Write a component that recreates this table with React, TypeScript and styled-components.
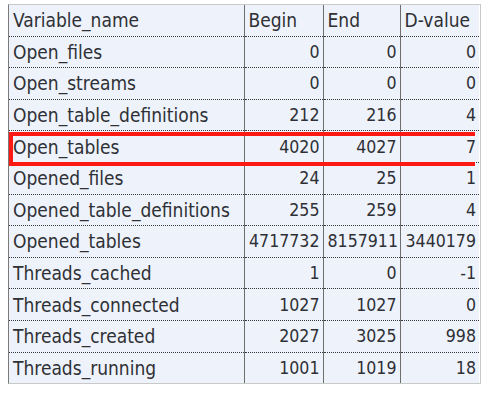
import React from "react";
import styled, { createGlobalStyle } from "styled-components";

const Global = createGlobalStyle`
  html, body { margin: 0; padding: 0; background: #ffffff; }
  body { font-family: "DejaVu Sans", Verdana, sans-serif; }
`;

const Page = styled.div`
  padding: 4px 0 0 8px;
`;

const Frame = styled.div`
  position: relative;
  width: 471px;
  border: 1px solid #c9c9c9;
  border-left-color: #7a7a7a;
`;

const Table = styled.table`
  border-collapse: collapse;
  table-layout: fixed;
  width: 470px;
  background: #eef3fb;
  color: #2f3036;
  font-size: 19px;
  font-family: "DejaVu Sans Condensed", "DejaVu Sans", sans-serif;
  font-stretch: condensed;
`;

const Cell = styled.td<{ $num?: boolean }>`
  height: 30.6px;
  padding: 0 3px 0 4px;
  text-align: ${(p) => (p.$num ? "right" : "left")};
  font-size: ${(p) => (p.$num ? "17.6px" : "19px")};
  white-space: nowrap;
  overflow: hidden;
  border-left: 1px solid #6e6e6e;
  border-bottom: 1px dotted #3a3a3a;
  &:first-child { border-left: none; }
`;

const Head = styled(Cell).attrs({ as: "th" })`
  font-weight: normal;
  text-align: left;
  font-size: 19px;
`;

const Row = styled.tr<{ $last?: boolean }>`
  ${(p) => (p.$last ? "td { border-bottom: none; }" : "")}
`;

const Highlight = styled.div`
  position: absolute;
  left: 0;
  top: 127px;
  width: 462px;
  height: 26px;
  border: 4px solid #fe1a14;
  border-right: none;
  pointer-events: none;
`;

const rows: [string, string, string, string][] = [
  ["Open_files", "0", "0", "0"],
  ["Open_streams", "0", "0", "0"],
  ["Open_table_definitions", "212", "216", "4"],
  ["Open_tables", "4020", "4027", "7"],
  ["Opened_files", "24", "25", "1"],
  ["Opened_table_definitions", "255", "259", "4"],
  ["Opened_tables", "4717732", "8157911", "3440179"],
  ["Threads_cached", "1", "0", "-1"],
  ["Threads_connected", "1027", "1027", "0"],
  ["Threads_created", "2027", "3025", "998"],
  ["Threads_running", "1001", "1019", "18"],
];

export default function App() {
  return (
    <Page>
      <Global />
      <Frame>
        <Table>
          <colgroup>
            <col style={{ width: 235 }} />
            <col style={{ width: 79 }} />
            <col style={{ width: 77 }} />
            <col style={{ width: 79 }} />
          </colgroup>
          <thead>
            <tr>
              <Head>Variable_name</Head>
              <Head>Begin</Head>
              <Head>End</Head>
              <Head>D-value</Head>
            </tr>
          </thead>
          <tbody>
            {rows.map((r, i) => (
              <Row key={r[0]} $last={i === rows.length - 1}>
                <Cell>{r[0]}</Cell>
                <Cell $num>{r[1]}</Cell>
                <Cell $num>{r[2]}</Cell>
                <Cell $num>{r[3]}</Cell>
              </Row>
            ))}
          </tbody>
        </Table>
        <Highlight />
      </Frame>
    </Page>
  );
}
